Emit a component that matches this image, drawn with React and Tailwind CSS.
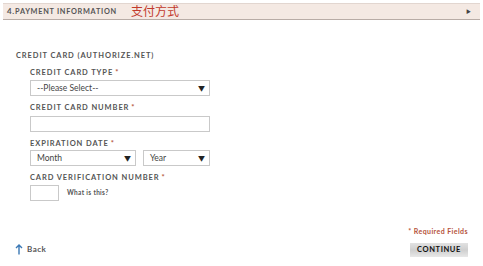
import React from "react";

const label = "text-[7.5px] tracking-[0.12em] text-[#555] font-bold leading-none";

function Star() {
  return <span className="text-[#b5523a] ml-[2px]">*</span>;
}

function Select({ text, width }) {
  return (
    <div
      className={`${width} h-[16px] border border-[#c9c9c9] bg-white flex items-center justify-between pl-[6px] pr-[4px]`}
    >
      <span className="text-[8.5px] text-[#444]">{text}</span>
      <span className="text-[7px] text-[#222]">▼</span>
    </div>
  );
}

export default function App() {
  return (
    <div
      className="w-[483px] h-[266px] bg-white relative overflow-hidden"
      style={{ fontFamily: "Lato, 'Noto Sans CJK SC', sans-serif" }}
    >
      <div className="mx-[3px] mt-[3px] h-[17px] bg-[#f4e9e3] border-t border-[#e2d6d0] border-b border-b-[#b8aca6] flex items-center pl-[4px] pr-[9px]">
        <span className="text-[7.3px] font-bold tracking-[0.1em] text-[#555]">
          <span className="text-[8px]">4.</span>PAYMENT INFORMATION
        </span>
        <span className="ml-[14px] text-[12px] text-[#c2392b] leading-none">支付方式</span>
        <span className="ml-auto text-[5px] text-[#444]">▶</span>
      </div>

      <div className="pl-[16px] pt-[32px]">
        <div className={label}>CREDIT CARD (AUTHORIZE.NET)</div>

        <div className="pl-[14px] pt-[9px] flex flex-col">
          <div className={label}>
            CREDIT CARD TYPE<Star />
          </div>
          <div className="mt-[4px]">
            <Select text="--Please Select--" width="w-[180px]" />
          </div>

          <div className={`${label} mt-[8px]`}>
            CREDIT CARD NUMBER<Star />
          </div>
          <div className="mt-[4px] w-[180px] h-[16px] border border-[#c9c9c9] bg-white" />

          <div className={`${label} mt-[8px]`}>
            EXPIRATION DATE<Star />
          </div>
          <div className="mt-[3px] flex gap-[7px]">
            <Select text="Month" width="w-[106px]" />
            <Select text="Year" width="w-[67px]" />
          </div>

          <div className={`${label} mt-[8px]`}>
            CARD VERIFICATION NUMBER<Star />
          </div>
          <div className="mt-[3px] flex items-center">
            <div className="w-[29px] h-[16px] border border-[#c9c9c9] bg-white" />
            <span className="ml-[8px] text-[6.5px] font-bold tracking-[0.05em] text-[#555]">
              What is this?
            </span>
          </div>
        </div>
      </div>

      <div className="absolute right-[15px] top-[226px] text-[7px] font-bold tracking-[0.06em] text-[#b5523a]">
        * Required Fields
      </div>

      <div className="absolute left-[15px] top-[243px] flex items-center gap-[4px]">
        <svg width="8" height="11" viewBox="0 0 8 11">
          <path d="M4 1 L4 10.5 M1 4 L4 1 L7 4" stroke="#3a78b5" strokeWidth="1.4" fill="none" />
        </svg>
        <span className="text-[8px] font-bold tracking-[0.06em] text-[#555]">Back</span>
      </div>

      <div className="absolute left-[410px] top-[243px] w-[58px] h-[14px] flex items-center justify-center bg-gradient-to-b from-[#e2e2e2] via-[#cfcfcf] to-[#e8e8e8]">
        <span className="text-[7.5px] font-bold tracking-[0.08em] text-[#111]">CONTINUE</span>
      </div>
    </div>
  );
}
